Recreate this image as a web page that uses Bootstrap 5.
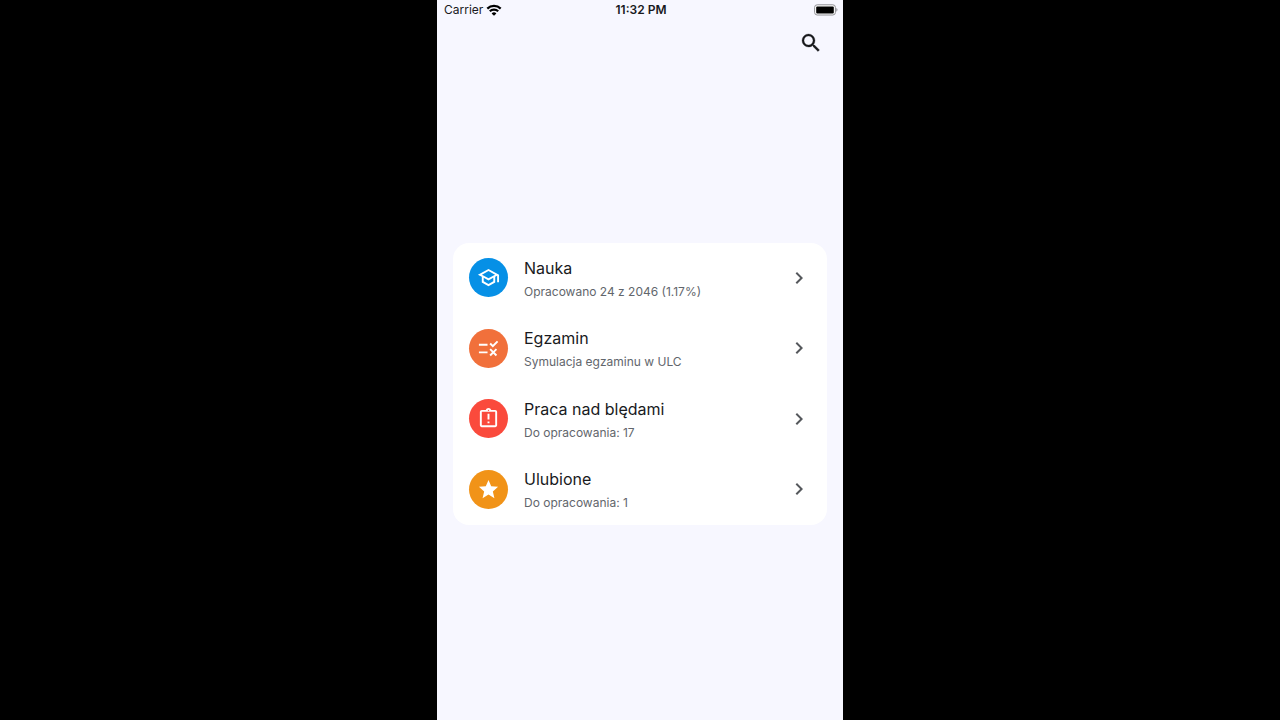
<!DOCTYPE html>
<html lang="pl">
<head>
<meta charset="utf-8">
<meta name="viewport" content="width=device-width, initial-scale=1">
<title>Nauka</title>
<link href="https://cdn.jsdelivr.net/npm/bootstrap@5.3.0/dist/css/bootstrap.min.css" rel="stylesheet">
<style>
  body { background: #000; font-family: Inter, "Liberation Sans", sans-serif; color: #191a1d; }
  .phone { max-width: 406px; background: #f7f7ff; }
  .status { height: 20px; font-size: 12px; line-height: 20px; padding: 0 5px 0 7px; }
  .network { gap: 3px; }
  .appbar { height: 46px; padding-right: 20px; }
  .content { padding-bottom: 19px; }
  .menu { border-radius: 16px; min-height: 282px; }
  .entry { color: inherit; padding-right: 16px; }
  .disc { width: 39px; height: 39px; }
  .disc svg { width: 23px; height: 23px; }
  .entry-title { font-size: 16px; line-height: 24px; }
  .entry-note { font-size: 12px; line-height: 24px; color: #62666c; }
  .blue { background: #0690e6; }
  .orange { background: #f1703b; }
  .red { background: #fa4a3c; }
  .amber { background: #f19318; }
  .chevron { color: #55585c; }
</style>
</head>
<body>
<div class="phone min-vh-100 mx-auto d-flex flex-column">
  <header>
    <div class="status row row-cols-3 g-0 align-items-center">
      <div class="network d-flex align-items-center">
        <span>Carrier</span>
        <svg width="16" height="12" viewBox="0 0 16 12" fill="none" stroke="#000" stroke-width="2.2" aria-label="Wi-Fi"><path d="M1.3 4.6a9.6 9.6 0 0 1 13.4 0M3.8 7.3a6 6 0 0 1 8.4 0"/><path d="M8 11.8 5.6 9.4a3.4 3.4 0 0 1 4.8 0z" fill="#000" stroke="none"/></svg>
      </div>
      <div class="text-center fw-semibold">11:32 PM</div>
      <div class="d-flex justify-content-end">
        <svg width="24" height="12" viewBox="0 0 24 12" aria-label="Bateria"><rect x=".6" y=".8" width="20.8" height="10.2" rx="2.6" fill="#fff" stroke="#8f8f94"/><rect x="2.2" y="2.4" width="17.6" height="7" rx="1" fill="#000"/><path d="M22.3 4.1c1.6.6 1.6 3 0 3.6z" fill="#8f8f94"/></svg>
      </div>
    </div>
    <div class="appbar d-flex justify-content-end align-items-center">
      <button type="button" class="btn p-0 border-0 d-flex" aria-label="Szukaj">
        <svg width="24" height="24" viewBox="0 0 24 24" fill="#17181b" stroke="#17181b" stroke-width=".3"><path d="M15.5 14h-.79l-.28-.27A6.47 6.47 0 0 0 16 9.5 6.5 6.5 0 1 0 9.5 16c1.61 0 3.09-.59 4.23-1.57l.27.28v.79l5 4.99L20.49 19l-4.99-5zm-6 0C7.01 14 5 11.99 5 9.5S7.01 5 9.5 5 14 7.01 14 9.5 11.99 14 9.5 14z"/></svg>
      </button>
    </div>
  </header>
  <main class="content flex-grow-1 d-flex flex-column justify-content-center px-3">
    <nav class="menu bg-white d-flex flex-column">
      <a href="#nauka" class="entry flex-fill d-flex align-items-center gap-3 ps-3 text-decoration-none">
        <span class="disc blue rounded-circle d-flex align-items-center justify-content-center"><svg viewBox="0 0 24 24" fill="#fff"><path d="M12 3 1 9l4 2.18v6L12 21l7-3.82v-6l2-1.09V17h2V9L12 3zm6.82 6L12 12.72 5.18 9 12 5.28 18.82 9zM17 15.99l-5 2.73-5-2.73v-3.72L12 15l5-2.73v3.72z"/></svg></span>
        <span class="flex-grow-1 pt-1"><span class="entry-title d-block">Nauka</span><span class="entry-note d-block">Opracowano 24 z 2046 (1.17%)</span></span>
        <svg class="chevron" width="24" height="24" viewBox="0 0 24 24" fill="currentColor"><path d="M10 6 8.59 7.41 13.17 12l-4.58 4.59L10 18l6-6z"/></svg>
      </a>
      <a href="#egzamin" class="entry flex-fill d-flex align-items-center gap-3 ps-3 text-decoration-none">
        <span class="disc orange rounded-circle d-flex align-items-center justify-content-center"><svg viewBox="0 0 24 24" fill="#fff"><path d="M16.54 11 13 7.46l1.41-1.41 2.12 2.12 4.24-4.24 1.41 1.41L16.54 11zM11 7H2v2h9V7zm10 6.41L19.59 12 17 14.59 14.41 12 13 13.41 15.59 16 13 18.59 14.41 20 17 17.41 19.59 20 21 18.59 18.41 16 21 13.41zM11 15H2v2h9v-2z"/></svg></span>
        <span class="flex-grow-1 pt-1"><span class="entry-title d-block">Egzamin</span><span class="entry-note d-block">Symulacja egzaminu w ULC</span></span>
        <svg class="chevron" width="24" height="24" viewBox="0 0 24 24" fill="currentColor"><path d="M10 6 8.59 7.41 13.17 12l-4.58 4.59L10 18l6-6z"/></svg>
      </a>
      <a href="#bledy" class="entry flex-fill d-flex align-items-center gap-3 ps-3 text-decoration-none">
        <span class="disc red rounded-circle d-flex align-items-center justify-content-center"><svg viewBox="0 0 24 24" fill="#fff"><path d="M19 3h-4.18C14.4 1.84 13.3 1 12 1s-2.4.84-2.82 2H5c-1.1 0-2 .9-2 2v14c0 1.1.9 2 2 2h14c1.1 0 2-.9 2-2V5c0-1.1-.9-2-2-2zm-7-.25c.41 0 .75.34.75.75s-.34.75-.75.75-.75-.34-.75-.75.34-.75.75-.75zM19 19H5V5h14v14zM11 15h2v2h-2zM11 7h2v6h-2z"/></svg></span>
        <span class="flex-grow-1 pt-1"><span class="entry-title d-block">Praca nad blędami</span><span class="entry-note d-block">Do opracowania: 17</span></span>
        <svg class="chevron" width="24" height="24" viewBox="0 0 24 24" fill="currentColor"><path d="M10 6 8.59 7.41 13.17 12l-4.58 4.59L10 18l6-6z"/></svg>
      </a>
      <a href="#ulubione" class="entry flex-fill d-flex align-items-center gap-3 ps-3 text-decoration-none">
        <span class="disc amber rounded-circle d-flex align-items-center justify-content-center"><svg viewBox="0 0 24 24" fill="#fff"><path d="M12 17.27 18.18 21l-1.64-7.03L22 9.24l-7.19-.61L12 2 9.19 8.63 2 9.24l5.46 4.73L5.82 21z"/></svg></span>
        <span class="flex-grow-1 pt-1"><span class="entry-title d-block">Ulubione</span><span class="entry-note d-block">Do opracowania: 1</span></span>
        <svg class="chevron" width="24" height="24" viewBox="0 0 24 24" fill="currentColor"><path d="M10 6 8.59 7.41 13.17 12l-4.58 4.59L10 18l6-6z"/></svg>
      </a>
    </nav>
  </main>
</div>
<script src="https://cdn.jsdelivr.net/npm/bootstrap@5.3.0/dist/js/bootstrap.bundle.min.js"></script>
</body>
</html>
